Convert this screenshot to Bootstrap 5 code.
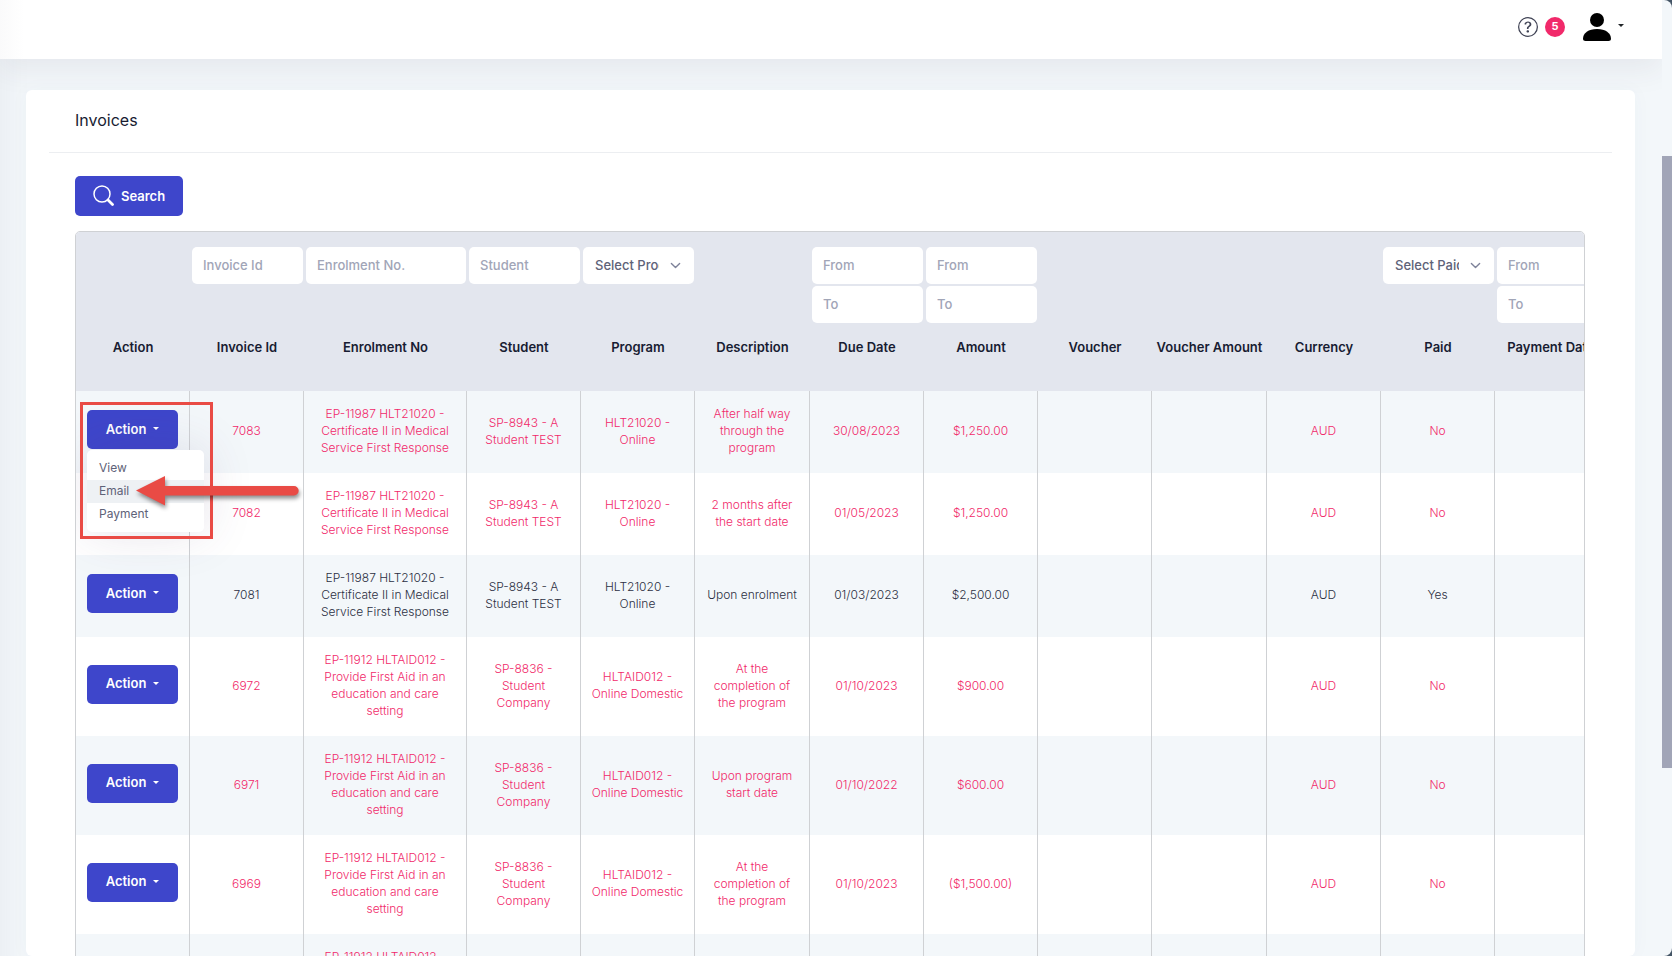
<!DOCTYPE html>
<html lang="en">
<head>
<meta charset="utf-8">
<meta name="viewport" content="width=device-width, initial-scale=1">
<title>Invoices</title>
<link href="https://cdn.jsdelivr.net/npm/bootstrap@5.3.0/dist/css/bootstrap.min.css" rel="stylesheet">
<style>
  :root { --brand: #3e46cb; --pink: #f1296a; --page: #f3f7fa; --line: #cfd1d4; --ink: #181c32; --note: #e94b45; }
  body { font-family: Inter, "Open Sans", sans-serif; font-size: 12px; line-height: 17px; background: #445566; color: var(--ink); }
  .app-shell { height: 100vh; background: var(--page); border-radius: 0 8px 8px 0; }
  .app-main { min-width: 0; box-shadow: inset 40px 0 30px -34px rgba(40, 45, 70, .05); }
  .top-bar { height: 59px; padding: 0 38px 5px 0; box-shadow: 0 10px 30px rgba(60, 50, 80, .08); background: linear-gradient(90deg, #fafafb, #fff 24px); }
  .help-btn { color: #3f4254; }
  .count-pill { width: 20px; height: 20px; margin-left: 7px; background: var(--pink); font-size: 11px; line-height: 19px; }
  .user-btn { padding: 0; gap: 5px; line-height: 1; }
  .user-btn .caret-down { margin-bottom: 4px; }
  .caret-down { border-top: 3px solid currentColor; border-left: 3px solid transparent; border-right: 3px solid transparent; }
  .panel { margin: 31px 27px 0 26px; border-radius: 6px; box-shadow: 0 0 20px rgba(76, 87, 125, .03); min-width: 0; }
  .panel-head { margin: 0 23px; height: 63px; padding: 0 26px 2px; border-bottom: 1px solid #eceef1; }
  .panel-head h1 { font-size: 16px; line-height: 24px; font-weight: 400; }
  .panel-content { padding: 23px 50px 0 49px; }
  .btn-brand { background: var(--brand); color: #fff; border: 0; border-radius: 5px; font-size: 13px; font-weight: 500; line-height: 20px; }
  .btn-brand:hover, .btn-brand:active { background: #343bb5 !important; color: #fff !important; }
  .btn-search { height: 40px; padding: 0 18px 1px; gap: 7px; font-weight: 600; }
  .btn-action { width: 91px; height: 39px; gap: 7px; margin-bottom: 5px; padding: 0 0 2px; font-weight: 600; }
  .grid-frame { margin-top: 15px; border: 1px solid var(--line); border-radius: 5px 5px 0 0; }
  .invoice-grid { table-layout: fixed; width: 1531px; border-collapse: separate; border-spacing: 0; text-align: center; }
  .invoice-grid .w-std { width: 114px; }
  .invoice-grid .w-mid { width: 115px; }
  .invoice-grid .w-wide { width: 163px; }
  .invoice-grid .w-last { width: 112px; }
  .invoice-grid thead { background: #e3e6ee; }
  .filter-row td { height: 92px; padding: 15px 1px 0 2px; vertical-align: top; }
  .head-row th { height: 67px; padding: 14px 0 0; vertical-align: top; font-size: 13px; line-height: 18px; font-weight: 600; white-space: nowrap; }
  .invoice-grid tbody td { padding: 14px 8px 17px; border-right: 1px solid var(--line); vertical-align: middle; font-weight: 300; }
  .invoice-grid tbody td:first-child { padding: 0 11px; text-align: left; }
  .invoice-grid tbody tr { color: var(--pink); }
  .invoice-grid tbody tr.settled { color: #2b2f42; }
  .invoice-grid tbody tr:nth-child(odd) { background: var(--page); }
  .filter-box { height: 37px; border: 0; border-radius: 5px; padding: 0 11px 2px; font-size: 13px; font-weight: 500; color: #5e6278; }
  .filter-box::placeholder { color: #a1a5b7; opacity: 1; }
  .filter-box + .filter-box { margin-top: 2px; }
  select.filter-box { padding: 0 35px 0 12px; text-overflow: clip; background-size: 11px 11px; background-position: right 13px center;
    background-image: url("data:image/svg+xml,%3csvg xmlns='http://www.w3.org/2000/svg' viewBox='0 0 16 16'%3e%3cpath fill='none' stroke='%237e8299' stroke-width='2' stroke-linecap='round' stroke-linejoin='round' d='m2 5 6 6 6-6'/%3e%3c/svg%3e"); }
  .row-menu { top: 40px; left: 0; min-width: 117px; padding: 7px 0 6px; border: 0; border-radius: 5px; box-shadow: 0 0 50px rgba(82, 63, 105, .15); font-size: 12px; }
  .row-menu .dropdown-item { padding: 0 12px 2px; line-height: 21px; color: #5e6278; }
  .row-menu .dropdown-item.current { background: #eef1f4; }
  .note-frame { top: -8px; left: -7px; width: 133px; height: 137px; border: 3px solid var(--note); z-index: 1001; pointer-events: none; }
  .note-arrow { top: 62px; left: 46px; z-index: 1002; pointer-events: none; filter: drop-shadow(1px 3px 2px rgba(0, 0, 0, .45)); }
  .scroll-rail { flex: 0 0 10px; padding-top: 156px; }
  .scroll-thumb { height: 64vh; background: #a1a5b7; }
</style>
</head>
<body>
<div class="app-shell d-flex overflow-hidden">
  <div class="app-main flex-grow-1 d-flex flex-column overflow-hidden">
    <header class="top-bar d-flex flex-shrink-0 align-items-center justify-content-end">
      <button class="help-btn btn p-0 border-0 d-flex align-items-center" type="button" aria-label="Help">
        <svg width="20" height="20" viewBox="0 0 16 16" fill="currentColor"><path d="M8 15A7 7 0 1 1 8 1a7 7 0 0 1 0 14m0 1A8 8 0 1 0 8 0a8 8 0 0 0 0 16"/><path d="M5.255 5.786a.237.237 0 0 0 .241.247h.825c.138 0 .248-.113.266-.25.09-.656.54-1.134 1.342-1.134.686 0 1.314.343 1.314 1.168 0 .635-.374.927-.965 1.371-.673.489-1.206 1.06-1.168 1.987l.003.217a.25.25 0 0 0 .25.246h.811a.25.25 0 0 0 .25-.25v-.105c0-.718.273-.927 1.01-1.486.609-.463 1.244-.977 1.244-2.056 0-1.511-1.276-2.241-2.673-2.241-1.267 0-2.655.59-2.75 2.286m1.557 5.763c0 .533.425.927 1.01.927.609 0 1.028-.394 1.028-.927 0-.552-.42-.94-1.029-.94-.584 0-1.009.388-1.009.94"/></svg>
      </button>
      <span class="count-pill rounded-circle text-white text-center fw-bold">5</span>
      <button class="user-btn btn border-0 d-flex align-items-center ms-3" type="button" aria-label="Account">
        <svg width="32" height="32" viewBox="0 0 32 32" fill="#000"><circle cx="16" cy="9" r="7"/><path d="M4.500 30c-1.500 0-2.500-.8-2.500-2.200C2 22 7.500 18 16 18s14 4 14 9.800c0 1.400-1 2.200-2.500 2.200z"/></svg>
        <span class="caret-down"></span>
      </button>
    </header>

    <main class="panel bg-white flex-grow-1 overflow-hidden">
      <div class="panel-head d-flex align-items-center"><h1 class="m-0">Invoices</h1></div>
      <div class="panel-content">
        <button class="btn btn-brand btn-search d-flex align-items-center" type="button">
          <svg width="21" height="21" viewBox="0 0 21 21" fill="none" stroke="#fff"><circle cx="9" cy="9" r="8" stroke-width="1.500"/><path d="m15 15 4.500 4.500" stroke-width="2.800" stroke-linecap="round"/></svg>
          Search
        </button>

        <div class="grid-frame overflow-hidden">
          <table class="invoice-grid">
            <colgroup>
              <col class="w-std"><col class="w-std"><col class="w-wide"><col class="w-std"><col class="w-std"><col class="w-mid"><col class="w-std"><col class="w-std"><col class="w-std"><col class="w-mid"><col class="w-std"><col class="w-std"><col class="w-last">
            </colgroup>
            <thead>
              <tr class="filter-row">
                <td></td>
                <td><input class="form-control filter-box" type="text" placeholder="Invoice Id" aria-label="Invoice Id"></td>
                <td><input class="form-control filter-box" type="text" placeholder="Enrolment No." aria-label="Enrolment No."></td>
                <td><input class="form-control filter-box" type="text" placeholder="Student" aria-label="Student"></td>
                <td><select class="form-select filter-box" aria-label="Program"><option>Select Program</option></select></td>
                <td></td>
                <td><input class="form-control filter-box" type="text" placeholder="From" aria-label="Due date from"><input class="form-control filter-box" type="text" placeholder="To" aria-label="Due date to"></td>
                <td><input class="form-control filter-box" type="text" placeholder="From" aria-label="Amount from"><input class="form-control filter-box" type="text" placeholder="To" aria-label="Amount to"></td>
                <td></td>
                <td></td>
                <td></td>
                <td><select class="form-select filter-box" aria-label="Paid"><option>Select Paid</option></select></td>
                <td><input class="form-control filter-box" type="text" placeholder="From" aria-label="Payment date from"><input class="form-control filter-box" type="text" placeholder="To" aria-label="Payment date to"></td>
              </tr>
              <tr class="head-row">
                <th>Action</th><th>Invoice Id</th><th>Enrolment No</th><th>Student</th><th>Program</th><th>Description</th><th>Due Date</th><th>Amount</th><th>Voucher</th><th>Voucher Amount</th><th>Currency</th><th>Paid</th><th>Payment Date</th>
              </tr>
            </thead>
            <tbody>
              <tr>
                <td>
                  <div class="position-relative">
                    <button class="btn btn-brand btn-action d-flex align-items-center justify-content-center" type="button" aria-expanded="true">Action <span class="caret-down"></span></button>
                    <div class="dropdown-menu row-menu show">
                      <a class="dropdown-item" href="#">View</a>
                      <a class="dropdown-item current" href="#">Email</a>
                      <a class="dropdown-item" href="#">Payment</a>
                    </div>
                    <div class="note-frame position-absolute"></div>
                    <svg class="note-arrow position-absolute" width="170" height="38" viewBox="0 0 170 38"><path fill="#e94b45" d="M3 18.500 32 4v10h129a4.700 4.700 0 0 1 0 9.400H32V33.500z"/></svg>
                  </div>
                </td>
                <td>7083</td><td>EP-11987 HLT21020 -<br>Certificate II in Medical<br>Service First Response</td><td>SP-8943 - A<br>Student TEST</td><td>HLT21020 -<br>Online</td><td>After half way<br>through the<br>program</td><td>30/08/2023</td><td>$1,250.00</td><td></td><td></td><td>AUD</td><td>No</td><td></td>
              </tr>
              <tr>
                <td></td>
                <td>7082</td><td>EP-11987 HLT21020 -<br>Certificate II in Medical<br>Service First Response</td><td>SP-8943 - A<br>Student TEST</td><td>HLT21020 -<br>Online</td><td>2 months after<br>the start date</td><td>01/05/2023</td><td>$1,250.00</td><td></td><td></td><td>AUD</td><td>No</td><td></td>
              </tr>
              <tr class="settled">
                <td><button class="btn btn-brand btn-action d-flex align-items-center justify-content-center" type="button">Action <span class="caret-down"></span></button></td>
                <td>7081</td><td>EP-11987 HLT21020 -<br>Certificate II in Medical<br>Service First Response</td><td>SP-8943 - A<br>Student TEST</td><td>HLT21020 -<br>Online</td><td>Upon enrolment</td><td>01/03/2023</td><td>$2,500.00</td><td></td><td></td><td>AUD</td><td>Yes</td><td></td>
              </tr>
              <tr>
                <td><button class="btn btn-brand btn-action d-flex align-items-center justify-content-center" type="button">Action <span class="caret-down"></span></button></td>
                <td>6972</td><td>EP-11912 HLTAID012 -<br>Provide First Aid in an<br>education and care<br>setting</td><td>SP-8836 -<br>Student<br>Company</td><td>HLTAID012 -<br>Online Domestic</td><td>At the<br>completion of<br>the program</td><td>01/10/2023</td><td>$900.00</td><td></td><td></td><td>AUD</td><td>No</td><td></td>
              </tr>
              <tr>
                <td><button class="btn btn-brand btn-action d-flex align-items-center justify-content-center" type="button">Action <span class="caret-down"></span></button></td>
                <td>6971</td><td>EP-11912 HLTAID012 -<br>Provide First Aid in an<br>education and care<br>setting</td><td>SP-8836 -<br>Student<br>Company</td><td>HLTAID012 -<br>Online Domestic</td><td>Upon program<br>start date</td><td>01/10/2022</td><td>$600.00</td><td></td><td></td><td>AUD</td><td>No</td><td></td>
              </tr>
              <tr>
                <td><button class="btn btn-brand btn-action d-flex align-items-center justify-content-center" type="button">Action <span class="caret-down"></span></button></td>
                <td>6969</td><td>EP-11912 HLTAID012 -<br>Provide First Aid in an<br>education and care<br>setting</td><td>SP-8836 -<br>Student<br>Company</td><td>HLTAID012 -<br>Online Domestic</td><td>At the<br>completion of<br>the program</td><td>01/10/2023</td><td>($1,500.00)</td><td></td><td></td><td>AUD</td><td>No</td><td></td>
              </tr>
              <tr>
                <td></td>
                <td></td><td>EP-11912 HLTAID012 -<br>Provide First Aid in an<br>education and care<br>setting</td><td></td><td></td><td></td><td></td><td></td><td></td><td></td><td></td><td></td><td></td>
              </tr>
            </tbody>
          </table>
        </div>
      </div>
    </main>
  </div>
  <div class="scroll-rail"><div class="scroll-thumb"></div></div>
</div>
<script src="https://cdn.jsdelivr.net/npm/bootstrap@5.3.0/dist/js/bootstrap.bundle.min.js"></script>
</body>
</html>
